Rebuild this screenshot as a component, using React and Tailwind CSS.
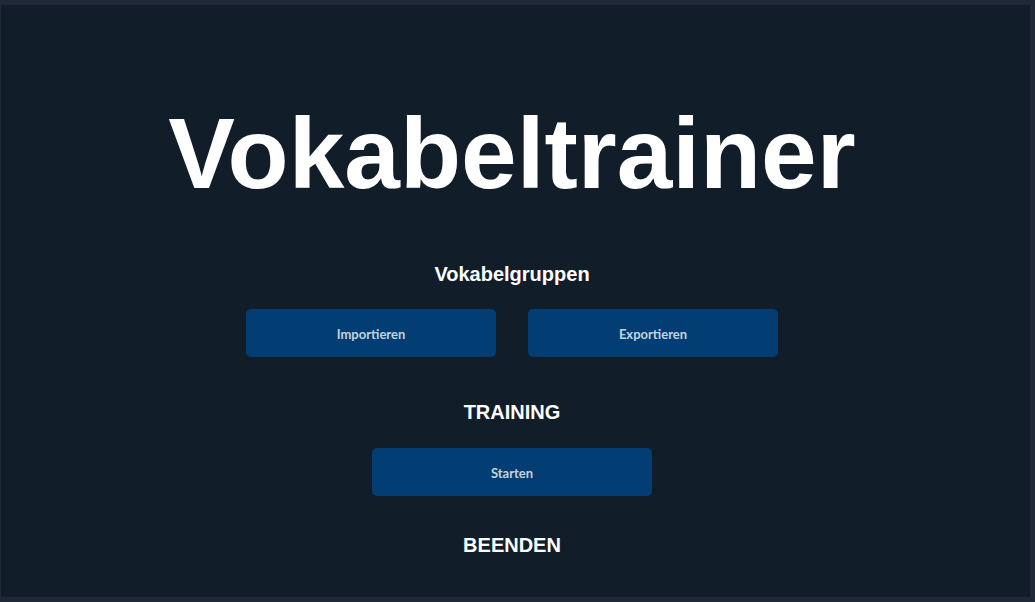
export default function App() {
  const heading = "text-[20px] leading-5 font-bold text-white";
  const button =
    "h-12 pt-[3px] rounded-[5px] bg-[#023e73] text-[13px] font-bold text-[#c5d2df] flex items-center justify-center";

  return (
    <div className="h-[602px] bg-[#1f2937] pt-[5px] pl-px pr-[5px] pb-[5px] flex" style={{ fontFamily: '"Liberation Sans", Arial, sans-serif' }}>
      <div className="flex-1 bg-[#111e2a] flex flex-col items-center pt-[98px] pr-[7px]">
        <h1 className="text-[100px] leading-none font-bold text-white">Vokabeltrainer</h1>

        <h2 className={`mt-[61px] ${heading}`}>Vokabelgruppen</h2>
        <div className="mt-[25px] flex gap-8 font-['Lato',sans-serif]">
          <button className={`w-[250px] ${button}`}>Importieren</button>
          <button className={`w-[250px] ${button}`}>Exportieren</button>
        </div>

        <h2 className={`mt-[45px] ${heading}`}>TRAINING</h2>
        <div className="mt-[26px] font-['Lato',sans-serif]">
          <button className={`w-[280px] ${button}`}>Starten</button>
        </div>

        <h2 className={`mt-[39px] ${heading}`}>BEENDEN</h2>
      </div>
    </div>
  );
}
